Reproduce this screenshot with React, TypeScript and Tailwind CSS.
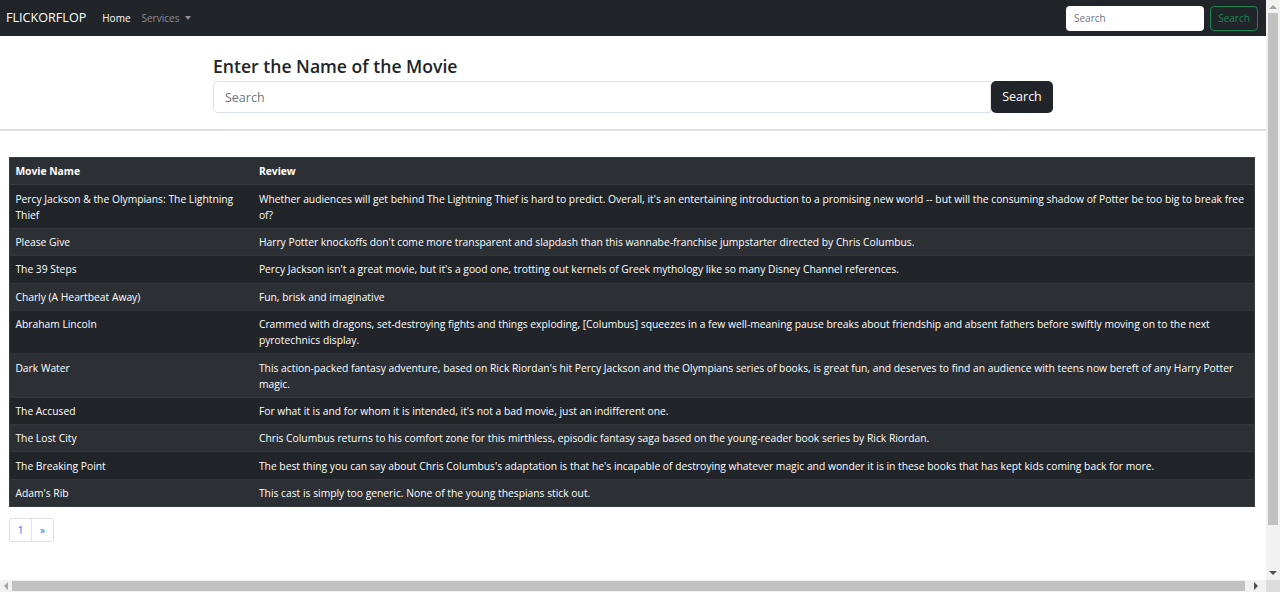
import React from "react";

const reviews = [
  {
    name: "Percy Jackson & the Olympians: The Lightning Thief",
    review:
      "Whether audiences will get behind The Lightning Thief is hard to predict. Overall, it's an entertaining introduction to a promising new world -- but will the consuming shadow of Potter be too big to break free of?",
  },
  {
    name: "Please Give",
    review:
      "Harry Potter knockoffs don't come more transparent and slapdash than this wannabe-franchise jumpstarter directed by Chris Columbus.",
  },
  {
    name: "The 39 Steps",
    review:
      "Percy Jackson isn't a great movie, but it's a good one, trotting out kernels of Greek mythology like so many Disney Channel references.",
  },
  { name: "Charly (A Heartbeat Away)", review: "Fun, brisk and imaginative" },
  {
    name: "Abraham Lincoln",
    review:
      "Crammed with dragons, set-destroying fights and things exploding, [Columbus] squeezes in a few well-meaning pause breaks about friendship and absent fathers before swiftly moving on to the next pyrotechnics display.",
  },
  {
    name: "Dark Water",
    review:
      "This action-packed fantasy adventure, based on Rick Riordan's hit Percy Jackson and the Olympians series of books, is great fun, and deserves to find an audience with teens now bereft of any Harry Potter magic.",
  },
  {
    name: "The Accused",
    review:
      "For what it is and for whom it is intended, it's not a bad movie, just an indifferent one.",
  },
  {
    name: "The Lost City",
    review:
      "Chris Columbus returns to his comfort zone for this mirthless, episodic fantasy saga based on the young-reader book series by Rick Riordan.",
  },
  {
    name: "The Breaking Point",
    review:
      "The best thing you can say about Chris Columbus's adaptation is that he's incapable of destroying whatever magic and wonder it is in these books that has kept kids coming back for more.",
  },
  {
    name: "Adam's Rib",
    review: "This cast is simply too generic. None of the young thespians stick out.",
  },
];

// window scrollbars as they show in the screenshot
const VScroll = () => (
  <div className="w-[14px] bg-[#f1f1f1] flex flex-col items-center">
    <div className="h-[13px] flex items-center justify-center">
      <span className="border-b-[4px] border-x-[4px] border-x-transparent border-b-[#a3a3a3]"></span>
    </div>
    <div className="w-[10px] h-[512px] bg-[#c1c1c1]"></div>
    <div className="flex-1 flex items-end justify-center pb-[5px]">
      <span className="border-t-[4px] border-x-[4px] border-x-transparent border-t-[#505050]"></span>
    </div>
  </div>
);

const HScroll = () => (
  <div className="h-[12px] flex bg-[#f1f1f1]">
    <div className="w-[1266px] flex items-center">
      <div className="w-[12px] flex justify-center">
        <span className="border-r-[4px] border-y-[4px] border-y-transparent border-r-[#a3a3a3]"></span>
      </div>
      <div className="w-[1233px] h-[10px] bg-[#c1c1c1]"></div>
      <div className="flex-1 flex justify-center">
        <span className="border-l-[4px] border-y-[4px] border-y-transparent border-l-[#505050]"></span>
      </div>
    </div>
    <div className="flex-1 bg-[#dcdcdc]"></div>
  </div>
);

const App: React.FC = () => {
  return (
    <div className="h-[592px] flex flex-col overflow-hidden font-['Open_Sans',sans-serif] text-[#212529] bg-white">
      <div className="flex-1 flex min-h-0">
        <div className="w-[1266px] overflow-hidden">
          <nav className="h-[36px] bg-[#212529] flex items-center px-[6px]">
            <span className="text-white text-[12.6px] mr-[16px]">FLICKORFLOP</span>
            <a className="text-white text-[10px] mr-[11px]">Home</a>
            <a className="text-[#8c8f93] text-[10px] flex items-center gap-[6px]">
              Services
              <span className="border-t-[4px] border-x-[3.5px] border-x-transparent border-t-[#8c8f93]"></span>
            </a>
            <div className="ml-auto flex items-center gap-[6px] pr-[2px]">
              <input
                placeholder="Search"
                className="w-[138px] h-[25px] bg-white rounded-[4px] px-[8px] text-[10px] outline-none placeholder:text-[#6c757d]"
              />
              <button className="w-[48px] h-[25px] rounded-[4px] border border-[#198754] text-[#198754] text-[10px]">
                Search
              </button>
            </div>
          </nav>

          <div className="border-b-2 border-[#dee2e6] pt-[20px] pb-[16px]">
            <div className="w-[840px] mx-auto">
              <h3 className="text-[17.6px] font-semibold leading-[1.2] mb-[4px]">
                Enter the Name of the Movie
              </h3>
              <div className="flex">
                <input
                  placeholder="Search"
                  className="flex-1 h-[32px] border border-[#dee2e6] rounded-l-[5px] px-[11px] text-[12.5px] outline-none placeholder:text-[#6c757d]"
                />
                <button className="w-[62px] h-[32px] bg-[#212529] text-white text-[12.5px] rounded-[5px]">
                  Search
                </button>
              </div>
            </div>
          </div>

          <div className="pl-[9px] pr-[11px] pt-[26px]">
            <table className="w-full border border-[#373b3e] border-collapse text-[10.3px] leading-[16px] text-white">
              <thead>
                <tr className="bg-[#2c3034]">
                  <th className="w-[244px] text-left font-bold px-[5.4px] py-[5.2px] border-b border-[#373b3e]">
                    Movie Name
                  </th>
                  <th className="text-left font-bold px-[5.4px] py-[5.2px] border-b border-[#373b3e]">
                    Review
                  </th>
                </tr>
              </thead>
              <tbody>
                {reviews.map((r, i) => (
                  <tr key={r.name} className={i % 2 === 0 ? "bg-[#212529]" : "bg-[#2c3034]"}>
                    <td className="align-top px-[5.4px] py-[5.2px] border-b border-[#32363a]">{r.name}</td>
                    <td className="align-top px-[5.4px] py-[5.2px] border-b border-[#32363a]">{r.review}</td>
                  </tr>
                ))}
              </tbody>
            </table>
          </div>

          <div className="pl-[9px] pt-[11px]">
            <div className="flex text-[10px] text-[#0d6efd]">
              <a className="w-[23px] h-[24px] flex items-center justify-center border border-[#dee2e6] rounded-l-[3px]">
                1
              </a>
              <a className="w-[22px] h-[24px] flex items-center justify-center border border-l-0 border-[#dee2e6] rounded-r-[3px]">
                »
              </a>
            </div>
          </div>
        </div>
        <VScroll />
      </div>
      <HScroll />
    </div>
  );
};

export default App;
